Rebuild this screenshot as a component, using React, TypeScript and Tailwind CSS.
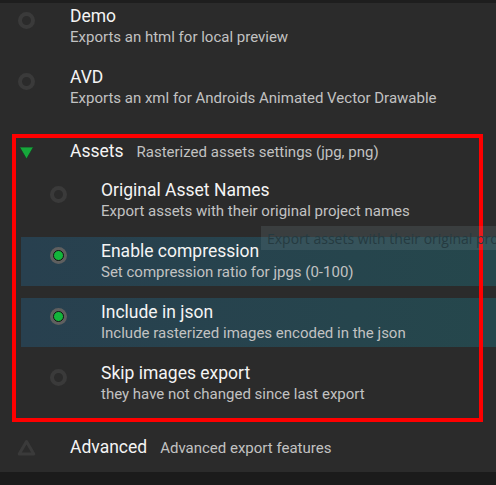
import type { ReactNode } from "react";

type Option = {
	title: string;
	hint: string;
	checked?: boolean;
};

const exporters: Option[] = [
	{ title: "Demo", hint: "Exports an html for local preview" },
	{ title: "AVD", hint: "Exports an xml for Androids Animated Vector Drawable" },
];

const assetOptions: Option[] = [
	{ title: "Original Asset Names", hint: "Export assets with their original project names" },
	{ title: "Enable compression", hint: "Set compression ratio for jpgs (0-100)", checked: true },
	{ title: "Include in json", hint: "Include rasterized images encoded in the json", checked: true },
	{ title: "Skip images export", hint: "they have not changed since last export" },
];

export default function App() {
	return (
		<div className="flex h-[485px] w-[496px] flex-col overflow-hidden bg-[#1b1b1b] font-['Roboto',sans-serif]">
			<div className="h-[3px] shrink-0 bg-[#1e1e1e]" />
			<div className="relative h-[469px] shrink-0 overflow-hidden bg-[#2b2b2b]">
				{exporters.map((option, index) => (
					<div
						key={option.title}
						className={`flex h-[49px] pl-[18px] pt-[3px] ${index > 0 ? "mt-[12px]" : ""}`}
					>
						<Radio checked={option.checked} />
						<OptionText option={option} className="ml-[35px]" />
					</div>
				))}

				<div className="relative mt-[21px] pb-[14px]">
					<SectionHeader
						icon={<ExpandedArrow />}
						title="Assets"
						hint="Rasterized assets settings (jpg, png)"
						className="pt-[7px]"
					/>
					<div className="mt-[15px] flex flex-col gap-[12px]">
						{assetOptions.map((option) => (
							<div
								key={option.title}
								className={`ml-[21px] flex h-[49px] pl-[29px] pt-[4px] ${
									option.checked ? "bg-gradient-to-r from-[#28404f] to-[#25474c]" : ""
								}`}
							>
								<Radio checked={option.checked} />
								<OptionText option={option} className="ml-[34px]" />
							</div>
						))}
					</div>
					{/* selection frame drawn over the group */}
					<div className="pointer-events-none absolute left-[12px] top-0 h-[288px] w-[471px] border-4 border-[#ff0000]" />
				</div>

				<SectionHeader
					icon={<CollapsedArrow />}
					title="Advanced"
					hint="Advanced export features"
					className="mt-[15px]"
				/>

				{/* hover tooltip left over from the first asset option */}
				<div className="pointer-events-none absolute left-[261px] top-[223px] flex h-[24px] w-[235px] items-center overflow-hidden whitespace-nowrap bg-[rgba(130,150,155,0.18)] pl-[6px] font-['Open_Sans',sans-serif] text-[14px] text-[#253a40]">
					Export assets with their original pro
				</div>
			</div>
		</div>
	);
}

function OptionText({ option, className = "" }: { option: Option; className?: string }) {
	return (
		<div className={className}>
			<div className="h-[20px] text-[17.5px] leading-[20px] text-[#f4f4f4]">{option.title}</div>
			<div className="h-[22px] text-[15px] leading-[22px] text-[#c2c2c2]">{option.hint}</div>
		</div>
	);
}

function SectionHeader({
	icon,
	title,
	hint,
	className = "",
}: {
	icon: ReactNode;
	title: string;
	hint: string;
	className?: string;
}) {
	return (
		<div className={`flex items-start pl-[18px] ${className}`}>
			<div className="h-[20px] w-[17px]">{icon}</div>
			<div className="ml-[35px] flex h-[20px] items-baseline">
				<span className="text-[17.5px] leading-[20px] text-[#f4f4f4]">{title}</span>
				<span className="ml-[13px] text-[15px] leading-[20px] text-[#c2c2c2]">{hint}</span>
			</div>
		</div>
	);
}

function Radio({ checked }: { checked?: boolean }) {
	if (checked) {
		return (
			<div className="mt-[6px] flex h-[17px] w-[17px] shrink-0 items-center justify-center rounded-full bg-[#5f5f5f]">
				<div className="h-[11px] w-[11px] rounded-full border border-[#111111] bg-[#13b53b]" />
			</div>
		);
	}
	return <div className="mt-[6px] h-[17px] w-[17px] shrink-0 rounded-full border-[4px] border-[#3a3a3a]" />;
}

function ExpandedArrow() {
	return (
		<svg width="17" height="20" viewBox="0 0 17 20" className="block overflow-visible">
			<path d="M1.5 6 L15.5 6 L8.5 18 Z" fill="#16a83b" stroke="#1d3324" strokeWidth="0.8" strokeLinejoin="round" />
		</svg>
	);
}

function CollapsedArrow() {
	return (
		<svg width="17" height="20" viewBox="0 0 17 20" className="block overflow-visible">
			<path d="M8.5 4.5 L15.8 17 L1.2 17 Z" fill="none" stroke="#3a3a3a" strokeWidth="3" strokeLinejoin="round" />
		</svg>
	);
}
